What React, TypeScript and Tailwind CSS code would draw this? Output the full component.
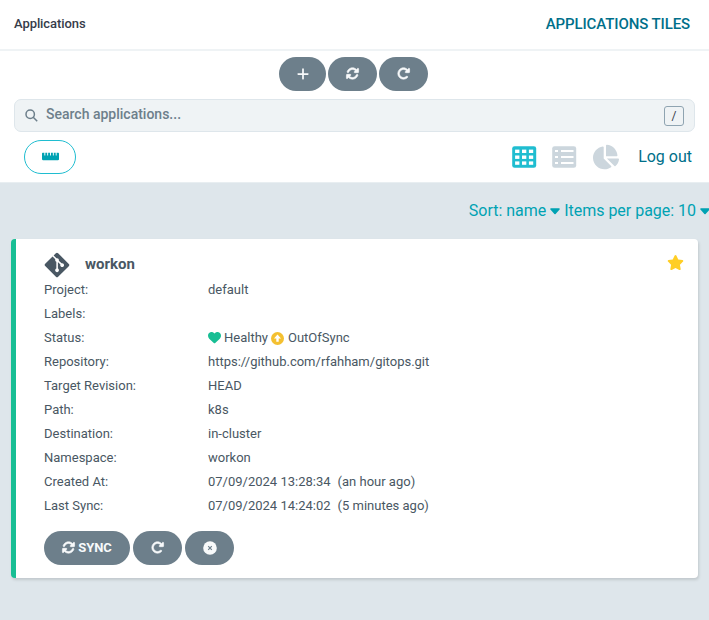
import type { ReactNode } from 'react';
import { FaGitAlt, FaHeart, FaPlus, FaRotate, FaRotateRight, FaStar } from 'react-icons/fa6';
import { FaChartPie, FaRulerHorizontal } from 'react-icons/fa';

function Pill({ children, className = 'w-[49px]' }: { children: ReactNode; className?: string }) {
  return (
    <button
      className={`flex h-[34px] shrink-0 items-center justify-center rounded-full bg-[#6d7f8b] pb-px text-[13px] font-medium text-[#f8fafb] ${className}`}
    >
      {children}
    </button>
  );
}

function SyncIcon() {
  return <FaRotate size={13} stroke="currentColor" strokeWidth={24} className="overflow-visible" />;
}

function RefreshIcon() {
  return <FaRotateRight size={13} stroke="currentColor" strokeWidth={24} className="overflow-visible" />;
}

function SearchIcon() {
  return (
    <svg width="13" height="13" viewBox="0 0 13 13" fill="none" stroke="#6d7f8b" strokeWidth="1.5">
      <circle cx="5.2" cy="5.2" r="4.2" />
      <path d="M8.2 8.2 12.2 12.2" />
    </svg>
  );
}

function CloseIcon() {
  return (
    <svg width="14" height="14" viewBox="0 0 14 14">
      <circle cx="7" cy="7" r="6.8" fill="#f8fafb" />
      <path d="M5.2 5.2 8.8 8.8M8.8 5.2 5.2 8.8" stroke="#6d7f8b" strokeWidth="1.2" />
    </svg>
  );
}

function OutOfSyncIcon() {
  return (
    <svg width="13" height="13" viewBox="0 0 13 13" className="ml-[3px]">
      <circle cx="6.5" cy="6.5" r="6.5" fill="#f4c030" />
      <path d="M6.5 2.6 10 6.4H7.7V9.8H5.3V6.4H3Z" fill="#fff" />
    </svg>
  );
}

function Caret({ className }: { className: string }) {
  return (
    <svg width="10" height="7" viewBox="0 0 10 7" className={`shrink-0 ${className}`}>
      <path
        d="M1 1H9L5 5.4Z"
        fill="currentColor"
        stroke="currentColor"
        strokeWidth="1.6"
        strokeLinejoin="round"
      />
    </svg>
  );
}

function TilesIcon() {
  return (
    <svg width="25" height="22" viewBox="0 0 25 22">
      <rect x="0.2" y="0.2" width="24" height="21.6" rx="2.4" fill="#1fbdd0" />
      {[3.6, 9.5, 15.4].map((y) =>
        [3.1, 10, 16.9].map((x) => <rect key={`${x}-${y}`} x={x} y={y} width="4.3" height="3.4" fill="#fff" />),
      )}
    </svg>
  );
}

function ListIcon() {
  return (
    <svg width="25" height="22" viewBox="0 0 25 22">
      <rect x="0.2" y="0.2" width="24" height="21.6" rx="2.4" fill="#ccd6dd" />
      {[4, 10, 16].map((y) => (
        <g key={y} fill="#fff">
          <rect x="3" y={y} width="3" height="2" />
          <rect x="9" y={y} width="12.5" height="2" />
        </g>
      ))}
    </svg>
  );
}

const rows: [string, ReactNode][] = [
  ['Project:', 'default'],
  ['Labels:', ''],
  [
    'Status:',
    <span className="flex items-center">
      <FaHeart size={13} color="#18be94" className="-mt-px" />
      <span className="ml-[3px]">Healthy</span>
      <OutOfSyncIcon />
      <span className="ml-[4px]">OutOfSync</span>
    </span>,
  ],
  ['Repository:', 'https://github.com/rfahham/gitops.git'],
  ['Target Revision:', 'HEAD'],
  ['Path:', 'k8s'],
  ['Destination:', 'in-cluster'],
  ['Namespace:', 'workon'],
  [
    'Created At:',
    <span className="flex gap-[7px]">
      <span>07/09/2024 13:28:34</span>
      <span>(an hour ago)</span>
    </span>,
  ],
  [
    'Last Sync:',
    <span className="flex gap-[7px]">
      <span>07/09/2024 14:24:02</span>
      <span>(5 minutes ago)</span>
    </span>,
  ],
];

export default function App() {
  return (
    <div className="flex h-[620px] w-[709px] flex-col overflow-hidden bg-[#dee6eb] font-['Roboto',sans-serif] text-[13px] text-[#495763]">
      <header className="flex h-[51px] shrink-0 items-center justify-between border-b-2 border-[#eff3f5] bg-white pr-[19px] pb-px pl-[14px]">
        <span className="text-[13px] font-medium tracking-[-0.08px] text-[#363c4a]">Applications</span>
        <span className="text-[15px] font-medium tracking-[-0.1px] text-[#006f8a]">APPLICATIONS TILES</span>
      </header>

      <section className="flex h-[132px] shrink-0 flex-col border-b border-[#e8eef1] bg-white">
        <div className="flex justify-center gap-[2px] pt-[6px] pr-[2px]">
          <Pill className="w-[47px]">
            <FaPlus size={14} />
          </Pill>
          <Pill>
            <SyncIcon />
          </Pill>
          <Pill>
            <RefreshIcon />
          </Pill>
        </div>

        <div className="mx-[14px] mt-[8px] flex h-[33px] shrink-0 items-center rounded-[7px] border border-[#dee6eb] bg-[#eff3f5] pr-[10px] pl-[10px]">
          <SearchIcon />
          <span className="-mt-[3px] ml-[8px] flex-1 text-[14px] font-medium text-[#6d7f8b]">
            Search applications...
          </span>
          <kbd className="mt-px flex h-[20px] w-[20px] items-center justify-center rounded-[3px] border border-[#8fa4b1] font-['Roboto',sans-serif] text-[12px] text-[#363c4a]">
            /
          </kbd>
        </div>

        <div className="mt-[8px] flex h-[34px] items-center pr-[17px] pl-[24px]">
          <button className="flex h-[34px] w-[52px] items-center justify-center rounded-full border border-[#1fbdd0] text-[#00a2b3]">
            <FaRulerHorizontal size={17} className="-mt-[2px]" />
          </button>
          <div className="ml-auto flex items-center">
            <TilesIcon />
            <span className="ml-[15px]">
              <ListIcon />
            </span>
            <FaChartPie size={26} color="#ccd6dd" className="ml-[16px]" />
            <span className="ml-[19px] text-[16px] text-[#006f8a]">Log out</span>
          </div>
        </div>
      </section>

      <main className="flex flex-1 flex-col">
        <div className="flex h-[56px] shrink-0 items-center justify-end text-[16px] tracking-[-0.02px] whitespace-nowrap text-[#00a2b3]">
          <span>Sort: name</span>
          <Caret className="mr-[4px] ml-[4px]" />
          <span>Items per page: 10</span>
          <Caret className="-mr-px ml-[4px]" />
        </div>

        <article className="mr-[11px] ml-[11px] flex h-[339px] flex-col rounded-[4px] border-l-[5px] border-[#18be94] bg-white pr-[14px] pl-[28px] shadow-[1px_2px_3px_rgba(0,0,0,0.13)]">
          <div className="flex h-[39px] shrink-0 items-end">
            <FaGitAlt size={28} className="-mb-px -ml-px" />
            <span className="mb-[3px] ml-[14px] text-[15px] font-bold">workon</span>
            <FaStar size={17} color="#ffce25" className="mb-[7px] ml-auto" />
          </div>
          <dl>
            {rows.map(([label, value]) => (
              <div key={label} className="flex h-[24px] items-center whitespace-pre">
                <dt className="w-[164px]">{label}</dt>
                <dd>{value}</dd>
              </div>
            ))}
          </dl>
          <div className="mt-[13px] flex gap-[3px]">
            <Pill className="w-[86px] gap-[3px]">
              <SyncIcon />
              <span className="font-bold">SYNC</span>
            </Pill>
            <Pill>
              <RefreshIcon />
            </Pill>
            <Pill>
              <CloseIcon />
            </Pill>
          </div>
        </article>
      </main>
    </div>
  );
}
